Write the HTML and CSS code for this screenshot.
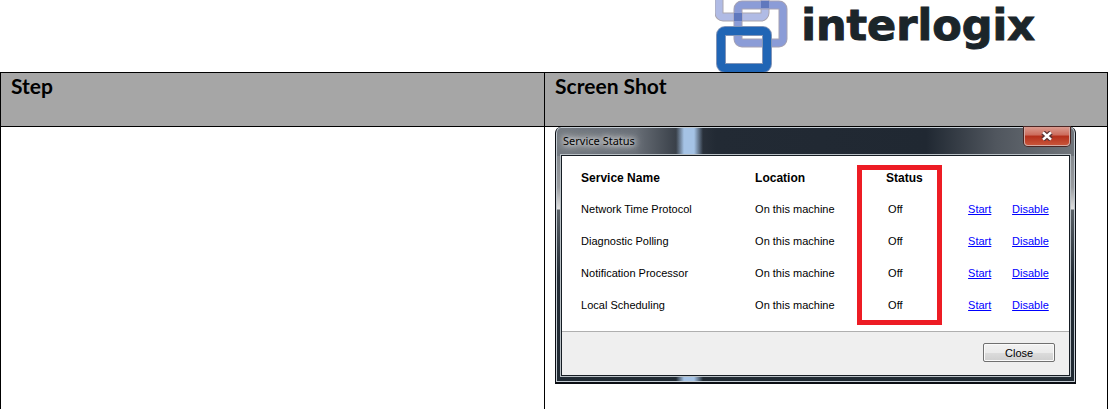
FILE: index.html
```html
<!DOCTYPE html>
<html lang="en">
<head>
    <meta charset="UTF-8">
    <meta name="viewport" content="width=device-width, initial-scale=1.0">
    <title>Service Status</title>
    <link rel="stylesheet" href="styles.css">
</head>
<body>

<header class="page-header">
    <svg class="logo-mark" width="73" height="72" viewBox="0 0 73 72" aria-hidden="true">
        <g fill="none">
            <rect x="4" y="-26" width="46" height="43" rx="4" stroke="#aaa6b0" stroke-width="9"/>
            <rect x="4" y="-26" width="46" height="43" rx="4" stroke="#b0bbe5" stroke-width="7"/>
            <rect x="23" y="5" width="45" height="38" rx="4" stroke="#a5a2b4" stroke-width="9"/>
            <rect x="23" y="5" width="45" height="38" rx="4" stroke="#8b9cd7" stroke-width="7"/>
        </g>
        <rect x="46" y="1" width="8" height="7" fill="#6078bd"/>
        <rect x="19" y="13" width="8" height="8" fill="#6078bd"/>
        <rect x="6" y="31" width="46" height="37" rx="4" fill="none" stroke="#8295b8" stroke-width="10"/>
        <rect x="6" y="31" width="46" height="37" rx="4" fill="none" stroke="#2065b5" stroke-width="8"/>
    </svg>
    <span class="logo-text">interlogix</span>
</header>

<table class="steps">
    <thead>
        <tr>
            <th class="step-col">Step</th>
            <th>Screen Shot</th>
        </tr>
    </thead>
    <tbody>
        <tr>
            <td></td>
            <td>
                <section class="window" aria-labelledby="window-title">
                    <div class="title-bar">
                        <h2 class="window-title" id="window-title">Service Status</h2>
                        <button class="window-x" type="button" aria-label="Close window">
                            <svg width="12" height="10" viewBox="0 0 12 10">
                                <path d="M2 1.5L10 8.5M10 1.5L2 8.5" stroke="#5b3434" stroke-width="5"/>
                                <path d="M2 1.4L10 8.6M10 1.4L2 8.6" stroke="#fff" stroke-width="2.6"/>
                            </svg>
                        </button>
                    </div>
                    <div class="window-body">
                        <div class="service-list">
                            <table class="services">
                                <thead>
                                    <tr>
                                        <th class="name">Service Name</th>
                                        <th class="location">Location</th>
                                        <th class="status">Status</th>
                                        <th class="start"></th>
                                        <th></th>
                                    </tr>
                                </thead>
                                <tbody>
                                    <tr>
                                        <td>Network Time Protocol</td>
                                        <td>On this machine</td>
                                        <td>Off</td>
                                        <td><a href="#">Start</a></td>
                                        <td><a href="#">Disable</a></td>
                                    </tr>
                                    <tr>
                                        <td>Diagnostic Polling</td>
                                        <td>On this machine</td>
                                        <td>Off</td>
                                        <td><a href="#">Start</a></td>
                                        <td><a href="#">Disable</a></td>
                                    </tr>
                                    <tr>
                                        <td>Notification Processor</td>
                                        <td>On this machine</td>
                                        <td>Off</td>
                                        <td><a href="#">Start</a></td>
                                        <td><a href="#">Disable</a></td>
                                    </tr>
                                    <tr>
                                        <td>Local Scheduling</td>
                                        <td>On this machine</td>
                                        <td>Off</td>
                                        <td><a href="#">Start</a></td>
                                        <td><a href="#">Disable</a></td>
                                    </tr>
                                </tbody>
                            </table>
                            <div class="highlight"></div>
                        </div>
                        <div class="window-footer">
                            <button class="close-button" type="button">Close</button>
                        </div>
                    </div>
                </section>
            </td>
        </tr>
    </tbody>
</table>

</body>
</html>
```

FILE: styles.css
```css
* {
    box-sizing: border-box;
}

body {
    margin: 0;
    background-color: #fff;
    color: #000;
    font-family: "Liberation Sans", Arial, sans-serif;
}

.page-header {
    display: flex;
    justify-content: flex-end;
    gap: 13px;
    height: 72px;
    padding-right: 73px;
}

.logo-mark {
    display: block;
}

.logo-text {
    color: #1b252a;
    font-family: "DejaVu Sans", sans-serif;
    font-size: 43px;
    font-weight: bold;
    line-height: 50px;
    -webkit-text-stroke: 1px #1b252a;
}

/* Steps table */
.steps {
    width: 100%;
    border-spacing: 0;
    border-right: 1px solid #000;
}

.steps > thead th {
    height: 54px;
    padding: 1px 10px;
    border-top: 1px solid #000;
    border-left: 1px solid #000;
    background-color: #a6a6a6;
    font-family: Lato, Carlito, sans-serif;
    font-size: 21px;
    line-height: 24px;
    text-align: left;
    vertical-align: top;
}

.steps .step-col {
    width: 49.15%;
}

.steps > tbody > tr > td {
    padding: 0 10px 25px;
    border-top: 1px solid #000;
    border-left: 1px solid #000;
    vertical-align: top;
}

/* Service status window */
.window {
    max-width: 521px;
    padding: 0 5px 6px;
    border: 1px solid #0b0e14;
    border-top: 0;
    border-bottom-width: 2px;
    border-radius: 6px 6px 0 0;
    background:
        linear-gradient(90deg, transparent 120px, #a5c3e5 128px, #a5c3e5 138px, transparent 147px),
        linear-gradient(90deg, #747a82 0, #686e76 80px, #343b44 125px, #222a34 160px, #202832 370px, #50565e 440px, #70757b 100%) top / 100% 29px no-repeat,
        linear-gradient(#747a80 0, #999ca0 60px, #e0e0e0 82px, #596066 83px, #222b35 150px, #202a33 100%);
    box-shadow: inset 0 0 0 1px #c3cbd2;
}

.title-bar {
    display: flex;
    justify-content: space-between;
    height: 28px;
    padding-left: 2px;
}

.window-title {
    margin: 0;
    padding-top: 5px;
    font-family: "Noto Sans", sans-serif;
    font-size: 11px;
    font-weight: normal;
    line-height: 18px;
    text-shadow: 0 0 4px #ddd, 0 0 6px #ddd, 0 0 8px #ddd, 0 0 12px #ccc;
}

.window-x {
    display: flex;
    align-items: center;
    justify-content: center;
    width: 46px;
    height: 19px;
    padding: 0;
    border: 1px solid #d5a9a2;
    border-top: 0;
    border-radius: 0 0 4px 4px;
    background: linear-gradient(#dc9c90 0, #cc6b5b 45%, #b42f1b 50%, #c85439 100%);
    box-shadow: 0 0 0 1px #4a2624;
    cursor: pointer;
}

.window-body {
    border: 1px solid #161d24;
    outline: 1px solid #b9c0c5;
    background-color: #fff;
}

.service-list {
    position: relative;
    padding: 7px 0 10px 19px;
}

.services {
    width: 100%;
    table-layout: fixed;
    border-spacing: 0;
    font-size: 11px;
    line-height: 14px;
}

.services th,
.services td {
    height: 32px;
    padding: 0;
    text-align: left;
}

.services th {
    height: 30px;
    font-size: 12px;
}

.services .name {
    width: 174px;
}

.services .location {
    width: 131px;
}

.services .status {
    width: 82px;
}

.services .start {
    width: 44px;
}

.services td:nth-child(3) {
    padding-left: 2px;
}

.services a {
    color: #00f;
}

/* Red frame round the Status column */
.highlight {
    position: absolute;
    top: 9px;
    left: 295px;
    width: 85px;
    height: 160px;
    border: 5px solid #ed1c24;
    pointer-events: none;
}

.window-footer {
    display: flex;
    justify-content: flex-end;
    padding: 11px 14px 13px;
    border-top: 1px solid #afafaf;
    background-color: #efefef;
}

.close-button {
    width: 72px;
    height: 19px;
    padding: 0;
    border: 1px solid #707070;
    border-radius: 2px;
    background: linear-gradient(#f2f2f2 0, #ebebeb 50%, #dcdcdc 51%, #cfcfcf 100%);
    box-shadow: inset 0 0 0 1px #fafafa;
    color: #000;
    font-family: "Liberation Sans", Arial, sans-serif;
    font-size: 11px;
    cursor: pointer;
}
```
